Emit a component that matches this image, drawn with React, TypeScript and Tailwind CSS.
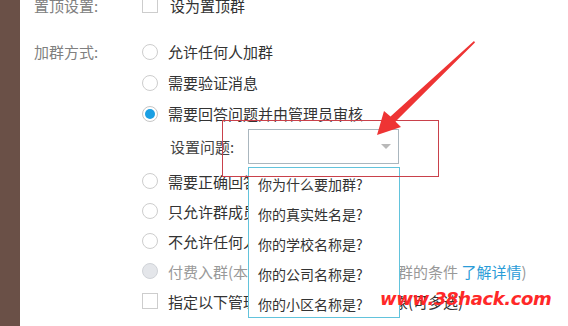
import React from 'react';

const font = { fontFamily: '"Noto Sans CJK SC", "Noto Sans", sans-serif' };

type Opt = { label: React.ReactNode; state?: 'on' | 'off' | 'disabled' };

const Radio: React.FC<{ state?: 'on' | 'off' | 'disabled' }> = ({ state = 'off' }) => {
  if (state === 'on') {
    return (
      <span className="flex h-[16px] w-[16px] items-center justify-center rounded-full border border-[#c6c6c6] bg-white">
        <span className="h-[10px] w-[10px] rounded-full bg-[#1a9fe3]" />
      </span>
    );
  }
  if (state === 'disabled') {
    return <span className="h-[16px] w-[16px] rounded-full border border-[#d0d3d8] bg-[#e4e6ea]" />;
  }
  return <span className="h-[16px] w-[16px] rounded-full border border-[#cdcdcd] bg-white" />;
};

const topOptions: Opt[] = [
  { label: '允许任何人加群' },
  { label: '需要验证消息' },
  { label: '需要回答问题并由管理员审核', state: 'on' },
];

const bottomOptions: Opt[] = [
  { label: '需要正确回答问题才能加群' },
  { label: '只允许群成员邀请加群' },
  { label: '不允许任何人加群' },
  {
    label: (
      <span className="text-[#999]">
        付费入群(本群暂不满足开通付费入群的条件 <span className="text-[#2a9cd8]">了解详情</span>)
      </span>
    ),
    state: 'disabled',
  },
];

const questions = ['你为什么要加群?', '你的真实姓名是?', '你的学校名称是?', '你的公司名称是?', '你的小区名称是?'];

export default function App() {
  return (
    <div className="relative flex h-[326px] w-[568px] overflow-hidden bg-white" style={font}>
      {/* left sidebar edge */}
      <div className="h-full w-[20px] shrink-0 bg-[#6a5047]" />

      <div className="flex flex-col pl-[14px]">
        {/* 置顶设置 */}
        <div className="mt-[-10px] flex h-[30px] items-center">
          <div className="w-[108px] text-[15px] leading-none text-[#808080]">置顶设置:</div>
          <span className="h-[16px] w-[16px] border border-[#cdcdcd] bg-white" />
          <span className="ml-[12px] text-[15px] leading-none text-[#333]">设为置顶群</span>
        </div>

        {/* 加群方式 */}
        <div className="mt-[16px] flex">
          <div className="flex h-[31px] w-[108px] items-center text-[15px] leading-none text-[#808080]">加群方式:</div>
          <div className="flex flex-col">
            {topOptions.map((o, i) => (
              <div key={i} className="flex h-[31px] items-center">
                <Radio state={o.state} />
                <span className="ml-[10px] whitespace-nowrap text-[15px] leading-none text-[#333]">{o.label}</span>
              </div>
            ))}

            <div className="flex h-[34px] items-center pl-[28px]">
              <span className="w-[78px] text-[15px] leading-none text-[#444]">设置问题:</span>
              <div className="flex h-[35px] w-[151px] items-center justify-end border border-[#aab6be] bg-white pr-[7px]">
                <span className="h-0 w-0 border-x-[5px] border-t-[5px] border-x-transparent border-t-[#b9b9b9]" />
              </div>
            </div>

            <div className="mt-[3px] flex flex-col">
              {bottomOptions.map((o, i) => (
                <div key={i} className="flex h-[30px] items-center">
                  <Radio state={o.state} />
                  <span className="ml-[10px] whitespace-nowrap text-[15px] leading-none text-[#333]">{o.label}</span>
                </div>
              ))}
              <div className="flex h-[30px] items-center">
                <span className="h-[16px] w-[16px] border border-[#cdcdcd] bg-white" />
                <span className="ml-[10px] whitespace-nowrap text-[15px] leading-none text-[#333]">
                  指定以下管理员为加群申请审核对象(可多选)
                </span>
              </div>
            </div>
          </div>
        </div>
      </div>

      {/* dropdown list */}
      <div className="absolute left-[248px] top-[167px] flex h-[151px] w-[152px] flex-col border border-[#62c3dc] bg-white pt-[1px]">
        {questions.map((q) => (
          <div key={q} className="flex h-[30px] shrink-0 items-center pl-[9px] text-[14px] leading-none text-[#333]">
            {q}
          </div>
        ))}
      </div>

      {/* red highlight box */}
      <div className="pointer-events-none absolute left-[222px] top-[120px] h-[57px] w-[217px] border border-[#c9414b]" />

      {/* red arrow */}
      <svg className="pointer-events-none absolute left-0 top-0" width="568" height="326" viewBox="0 0 568 326">
        <polygon
          points="474,41 390.5,116.5 384,111 377,135 401,127 395.5,121.5 475,42.5"
          fill="#ee3434"
        />
      </svg>

      {/* watermark */}
      <div
        className="pointer-events-none absolute left-[380px] top-[290px] whitespace-nowrap text-[18px] font-bold italic leading-none tracking-[-0.4px] text-[#ff2828]"
        style={{ fontFamily: '"DejaVu Sans", sans-serif' }}
      >
        www.38hack.com
      </div>
    </div>
  );
}
